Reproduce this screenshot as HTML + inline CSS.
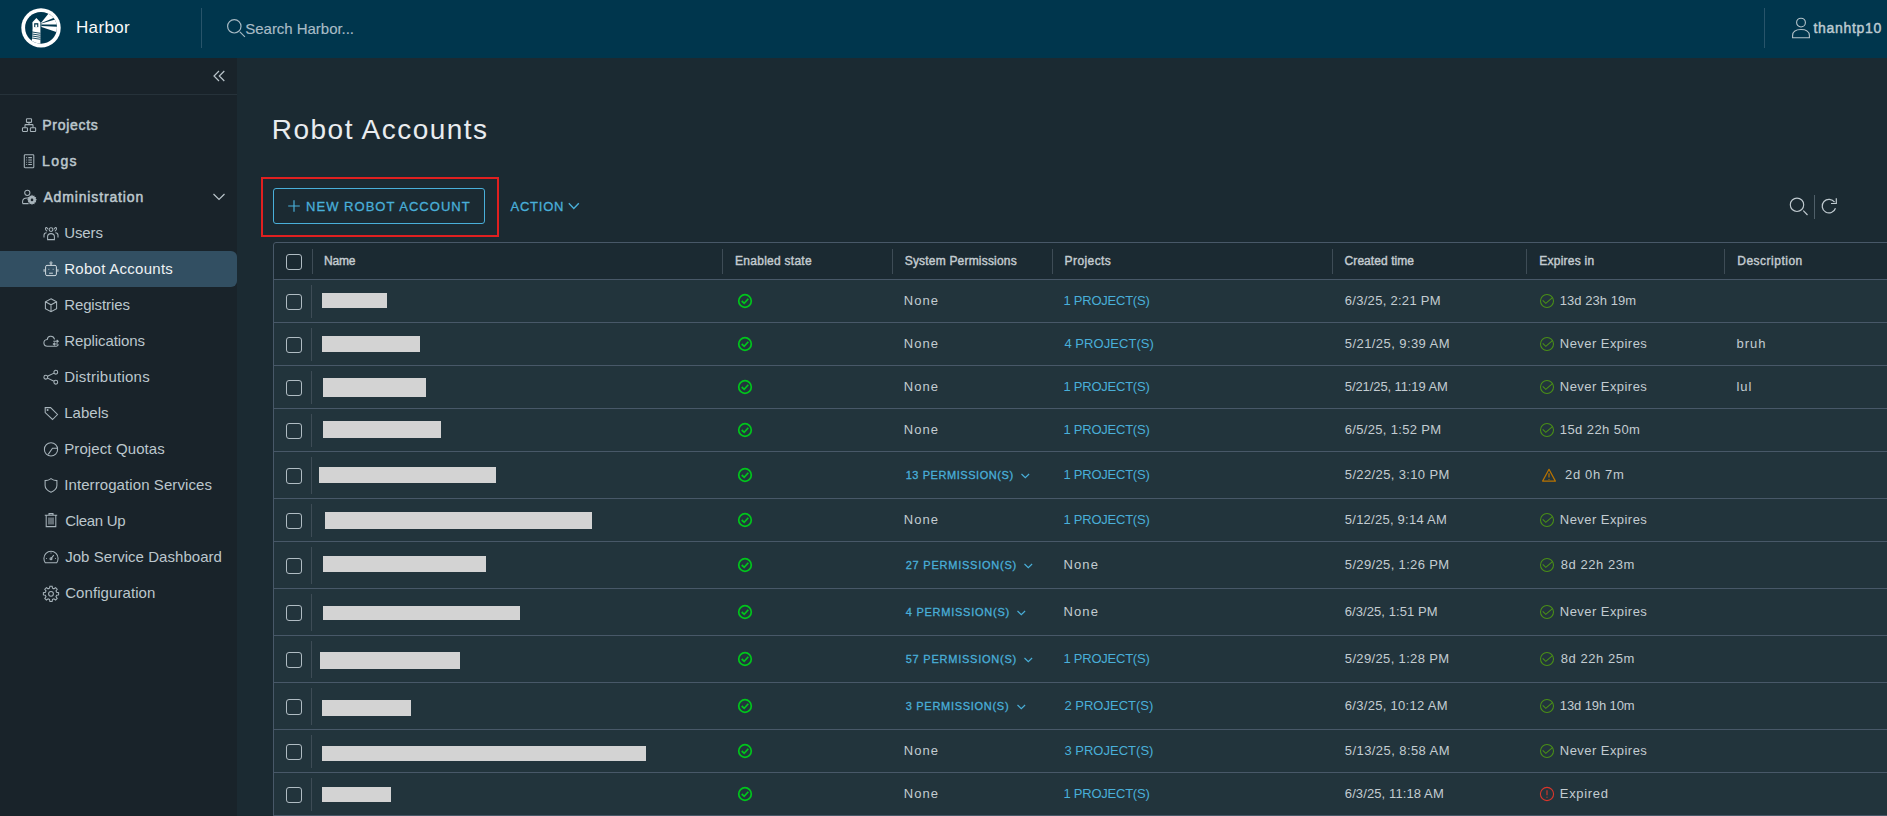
<!DOCTYPE html>
<html><head><meta charset="utf-8">
<style>
*{box-sizing:border-box;margin:0;padding:0}
html,body{width:1887px;height:816px;overflow:hidden;background:#1b2a32;font-family:"Liberation Sans",sans-serif;position:relative}
.a{position:absolute}
.t{position:absolute;white-space:nowrap;line-height:1}
svg{position:absolute;overflow:visible}
</style></head><body>
<div class="a" style="left:0px;top:0px;width:1887px;height:58px;background:#00364d;"></div>
<svg style="left:20px;top:7px" width="42" height="42" viewBox="0 0 42 42">
<defs><clipPath id="ic"><circle cx="21" cy="20.85" r="15.9"/></clipPath></defs>
<circle cx="21" cy="20.85" r="19.7" fill="#fff"/>
<circle cx="21" cy="20.85" r="15.9" fill="#00364d"/>
<g clip-path="url(#ic)">
<polygon fill="#fff" points="21.3,15.4 31,3.6 42,3.6 42,27 21.5,20.1"/>
<polygon fill="#00364d" points="21.4,16.0 41,7.9 41,10.9 21.4,16.5"/>
<polygon fill="#00364d" points="21.4,17.6 41,17.35 41,20.0 21.4,18.9"/>
<polygon fill="#fff" points="12.4,15.3 16.4,11 20.4,15.3 20.4,42 10.5,42 11.8,34.5 12.6,21"/>
</g>
<rect x="14.2" y="16.2" width="4.1" height="3.9" fill="#00364d"/>
<rect x="15.3" y="17.5" width="1.9" height="2.6" fill="#fff"/>
<g stroke="#00364d" stroke-width="0.9">
<line x1="11.5" y1="24.9" x2="20.4" y2="26.3"/>
<line x1="11.5" y1="26.9" x2="20.4" y2="28.3"/>
<line x1="11.5" y1="28.9" x2="20.4" y2="30.3"/>
<line x1="11.5" y1="30.9" x2="20.4" y2="32.3"/>
</g>
</svg>
<div class="t" style="left:75.90px;top:19px;font-size:17px;color:#fafafa;letter-spacing:0.380px">Harbor</div>
<div class="a" style="left:201px;top:8px;width:1px;height:40px;background:#28546a;"></div>
<svg style="left:226px;top:18px" width="20" height="20" viewBox="0 0 20 20"><g fill="none" stroke="#a7bac4" stroke-width="1.2"><circle cx="8.3" cy="8.3" r="6.7"/><line x1="13.9" y1="13.9" x2="18.9" y2="18.9"/></g></svg>
<div class="t" style="left:245.30px;top:21px;font-size:15px;color:#a9bcc6;letter-spacing:-0.033px;-webkit-text-stroke:0.15px #a9bcc6">Search Harbor...</div>
<div class="a" style="left:1764px;top:8px;width:1px;height:40px;background:#28546a;"></div>
<svg style="left:1791px;top:17px" width="21" height="22" viewBox="0 0 21 22"><g fill="none" stroke="#b4c3ca" stroke-width="1.1"><circle cx="10" cy="5.6" r="4.4"/><path d="M1.6,20.7 V18.6 C1.6,14.2 5.4,12.5 10,12.5 C14.6,12.5 18.4,14.2 18.4,18.6 V20.7 Z"/></g></svg>
<div class="t" style="left:1813.50px;top:21px;font-size:14px;color:#bccad1;letter-spacing:0.675px;-webkit-text-stroke:0.45px #bccad1">thanhtp10</div>
<div class="a" style="left:0px;top:58px;width:237px;height:758px;background:#19232a;"></div>
<div class="a" style="left:0px;top:94px;width:237px;height:1px;background:#26323a;"></div>
<svg style="left:212px;top:69px" width="14" height="14" viewBox="0 0 14 14"><g fill="none" stroke="#b9c4ca" stroke-width="1.2"><polyline points="7,2 2,7 7,12"/><polyline points="12.3,2 7.3,7 12.3,12"/></g></svg>
<div class="a" style="left:0px;top:251px;width:237px;height:36px;background:#324f62;border-radius:0 6px 6px 0"></div>
<svg style="left:21px;top:117px" width="16" height="16" viewBox="0 0 16 16"><g fill="none" stroke="#a8b4bb" stroke-width="1.05"><rect x="5.45" y="1.65" width="5.1" height="3.7" rx="0.7"/><rect x="1.45" y="10.75" width="5" height="3.7" rx="0.7"/><rect x="9.35" y="10.75" width="5.3" height="3.7" rx="0.7"/><path d="M8,5.35 V7.6 M4,10.75 V8.2 Q4,7.6 4.6,7.6 H11.4 Q12,7.6 12,8.2 V10.75"/></g></svg>
<div class="t" style="left:42.30px;top:118px;font-size:14px;color:#bcc7cd;letter-spacing:0.700px;-webkit-text-stroke:0.5px #bcc7cd">Projects</div>
<svg style="left:22px;top:153px" width="16" height="16" viewBox="0 0 16 16"><g fill="none" stroke="#a8b4bb" stroke-width="1.05"><rect x="2.3" y="1.7" width="9.5" height="13" rx="0.8"/><path d="M4.3,4.6 h0.8 M6.3,4.6 h3.6 M4.3,6.9 h0.8 M6.3,6.9 h3.6 M4.3,9.2 h0.8 M6.3,9.2 h3.6 M4.3,11.5 h0.8 M6.3,11.5 h3.6"/></g></svg>
<div class="t" style="left:42.10px;top:154px;font-size:14px;color:#bcc7cd;letter-spacing:1.367px;-webkit-text-stroke:0.5px #bcc7cd">Logs</div>
<svg style="left:21px;top:189px" width="16" height="16" viewBox="0 0 16 16"><g fill="none" stroke="#a8b4bb" stroke-width="1.05"><circle cx="6.3" cy="3.8" r="2.6"/><path d="M1.6,14.6 V12.6 Q1.6,9 6.3,9 Q7.5,9 8.3,9.3 M1.6,14.6 H7.6"/></g></svg>
<svg style="left:27.1px;top:194.4px" width="10" height="10" viewBox="0 0 10 10"><g fill="#a8b4bb"><path d="M5,0.6 l0.9,1.3 1.5,-0.5 0.2,1.6 1.6,0.3 -0.5,1.5 1.2,1 -1.2,1 0.5,1.5 -1.6,0.3 -0.2,1.6 -1.5,-0.5 -0.9,1.3 -0.9,-1.3 -1.5,0.5 -0.2,-1.6 -1.6,-0.3 0.5,-1.5 -1.2,-1 1.2,-1 -0.5,-1.5 1.6,-0.3 0.2,-1.6 1.5,0.5 Z"/></g><circle cx="5" cy="5.9" r="1.3" fill="#19232a"/></svg>
<div class="t" style="left:43.40px;top:190px;font-size:14px;color:#bcc7cd;letter-spacing:0.854px;-webkit-text-stroke:0.5px #bcc7cd">Administration</div>
<svg style="left:212px;top:192px" width="14" height="10" viewBox="0 0 14 10"><polyline points="1.5,2 7,7.5 12.5,2" fill="none" stroke="#b9c4ca" stroke-width="1.2"/></svg>
<svg style="left:43px;top:225px" width="16" height="16" viewBox="0 0 16 16"><g fill="none" stroke="#a8b4bb" stroke-width="1.05"><circle cx="8" cy="4.6" r="1.9"/><path d="M4.6,14.6 V11.8 Q4.6,8.6 8,8.6 Q11.4,8.6 11.4,11.8 V14.6 Z"/><path d="M5,4.2 Q3.3,1.3 2.5,3.2 Q2.2,5.4 4.2,6.2 M1,12.6 V10.3 Q1,7.8 3.6,7.8"/><path d="M11,4.2 Q12.7,1.3 13.5,3.2 Q13.8,5.4 11.8,6.2 M15,12.6 V10.3 Q15,7.8 12.4,7.8"/></g></svg>
<div class="t" style="left:64.20px;top:225px;font-size:15px;color:#bcc7cd;letter-spacing:-0.100px">Users</div>
<div class="t" style="left:64.20px;top:261px;font-size:15px;color:#eef2f4;letter-spacing:0.277px">Robot Accounts</div>
<div class="t" style="left:64.20px;top:297px;font-size:15px;color:#bcc7cd;letter-spacing:-0.111px">Registries</div>
<div class="t" style="left:64.20px;top:333px;font-size:15px;color:#bcc7cd;letter-spacing:-0.073px">Replications</div>
<div class="t" style="left:64.20px;top:369px;font-size:15px;color:#bcc7cd;letter-spacing:0.250px">Distributions</div>
<div class="t" style="left:64.20px;top:405px;font-size:15px;color:#bcc7cd;letter-spacing:0.020px">Labels</div>
<div class="t" style="left:64.20px;top:441px;font-size:15px;color:#bcc7cd;letter-spacing:0.108px">Project Quotas</div>
<div class="t" style="left:64.20px;top:477px;font-size:15px;color:#bcc7cd;letter-spacing:0.090px">Interrogation Services</div>
<div class="t" style="left:65.20px;top:513px;font-size:15px;color:#bcc7cd;letter-spacing:-0.300px">Clean Up</div>
<div class="t" style="left:65.20px;top:549px;font-size:15px;color:#bcc7cd;letter-spacing:0.040px">Job Service Dashboard</div>
<div class="t" style="left:65.20px;top:585px;font-size:15px;color:#bcc7cd;letter-spacing:0.075px">Configuration</div>
<svg style="left:43px;top:261px" width="16" height="16" viewBox="0 0 16 16"><g fill="none" stroke="#d2dbe0" stroke-width="1"><rect x="2.6" y="4.4" width="10.8" height="10.2" rx="1.4"/><circle cx="8" cy="1.9" r="1.05" stroke-width="0.9"/><path d="M8,3 V4.4 M1.1,8.2 V10.8 M14.9,8.2 V10.8 M6.1,12.2 H9.9"/><path d="M5.6,8.3 h0.6 M9.8,8.3 h0.6" stroke-width="1.2"/></g></svg>
<svg style="left:43px;top:297px" width="16" height="16" viewBox="0 0 16 16"><g fill="none" stroke="#a8b4bb" stroke-width="1.05"><path d="M8,1.8 L13.6,4.8 V11.6 L8,14.6 L2.4,11.6 V4.8 Z M2.4,4.8 L8,7.8 L13.6,4.8 M8,7.8 V14.6"/></g></svg>
<svg style="left:42px;top:332px" width="18" height="18" viewBox="0 0 18 18"><g fill="none" stroke="#a8b4bb" stroke-width="1.05"><path d="M12.6,7.3 Q11.6,4 8.4,4.3 Q5.6,4.6 5.2,7.6 Q1.8,7.9 1.9,11.1 Q2.2,14.2 5.4,14.2 H14.4 Q16,14 16.4,12.4"/><path d="M11.3,9.3 H16.2 M14.7,7.9 L16.3,9.3 L14.7,10.7 M16,12 H11.3 M12.9,10.6 L11.3,12 L12.9,13.4"/></g></svg>
<svg style="left:43px;top:369px" width="16" height="16" viewBox="0 0 16 16"><g fill="none" stroke="#a8b4bb" stroke-width="1.05"><circle cx="2.8" cy="8.2" r="1.9"/><circle cx="12.8" cy="3.2" r="1.9"/><circle cx="12.8" cy="13.2" r="1.9"/><path d="M4.5,7.3 L11,4.1 M4.5,9.1 L11,12.3"/></g></svg>
<svg style="left:43px;top:405px" width="16" height="16" viewBox="0 0 16 16"><g fill="none" stroke="#a8b4bb" stroke-width="1.05"><path d="M2.2,2.6 H7.6 L14.5,9.5 L9.5,14.5 L2.2,7.6 Z"/><circle cx="4.6" cy="5" r="0.5" fill="{ICON}"/></g></svg>
<svg style="left:43px;top:441px" width="16" height="16" viewBox="0 0 16 16"><g fill="none" stroke="#a8b4bb" stroke-width="1.05"><circle cx="8" cy="8.4" r="6.6"/><path d="M14,7.2 H9.5 L5.2,13.4"/></g></svg>
<svg style="left:43px;top:477px" width="16" height="16" viewBox="0 0 16 16"><g fill="none" stroke="#a8b4bb" stroke-width="1.05"><path d="M8,1.6 Q10.5,3.6 13.9,3.6 V8.6 Q13.9,12.9 8,15.2 Q2.1,12.9 2.1,8.6 V3.6 Q5.5,3.6 8,1.6 Z"/></g></svg>
<svg style="left:43px;top:512px" width="16" height="16" viewBox="0 0 16 16"><g fill="none" stroke="#a8b4bb" stroke-width="1.05"><path d="M1.8,3.3 H14.2 M6,3.3 V1.6 H10 V3.3 M3.2,3.3 V14.6 H12.8 V3.3 M6,5.6 V12.4 M8,5.6 V12.4 M10,5.6 V12.4"/></g></svg>
<svg style="left:43px;top:548px" width="16" height="16" viewBox="0 0 16 16"><g fill="none" stroke="#a8b4bb" stroke-width="1.05"><path d="M2.4,14.8 Q0.9,12.9 0.9,10.3 A7.1,7.1 0 0 1 15.1,10.3 Q15.1,12.9 13.6,14.8 Z"/><path d="M8,10.6 L10.8,7.2 M3,10.4 H3.8 M12.2,10.4 H13 M8,4.6 V5.4"/><circle cx="8" cy="10.8" r="1" fill="{ICON}"/></g></svg>
<svg style="left:43px;top:585px" width="17" height="17" viewBox="0 0 17 17"><g fill="none" stroke="#a8b4bb" stroke-width="1.05"><path d="M6.9,1.2 H9.1 L9.5,3.2 L10.9,3.8 L12.6,2.6 L14.2,4.2 L13,5.9 L13.6,7.3 L15.6,7.7 V9.9 L13.6,10.3 L13,11.7 L14.2,13.4 L12.6,15 L10.9,13.8 L9.5,14.4 L9.1,16.4 H6.9 L6.5,14.4 L5.1,13.8 L3.4,15 L1.8,13.4 L3,11.7 L2.4,10.3 L0.4,9.9 V7.7 L2.4,7.3 L3,5.9 L1.8,4.2 L3.4,2.6 L5.1,3.8 L6.5,3.2 Z"/><circle cx="8" cy="8.8" r="2.4"/></g></svg>
<div class="t" style="left:271.80px;top:116px;font-size:28px;color:#e9ecef;letter-spacing:1.477px">Robot Accounts</div>
<div class="a" style="left:261px;top:177px;width:238px;height:60px;background:transparent;border:2px solid #e02020"></div>
<div class="a" style="left:273px;top:188px;width:212px;height:36px;background:transparent;border:1px solid #49afd9;border-radius:3px"></div>
<svg style="left:287px;top:199px" width="14" height="14" viewBox="0 0 14 14"><path d="M7,1.2 V12.8 M1.2,7 H12.8" stroke="#49afd9" stroke-width="1.2" fill="none"/></svg>
<div class="t" style="left:306.00px;top:200px;font-size:13px;color:#49afd9;letter-spacing:1.037px;-webkit-text-stroke:0.3px #49afd9">NEW ROBOT ACCOUNT</div>
<div class="t" style="left:510.50px;top:200px;font-size:13px;color:#49afd9;letter-spacing:0.780px;-webkit-text-stroke:0.3px #49afd9">ACTION</div>
<svg style="left:567px;top:201px" width="14" height="11" viewBox="0 0 14 11"><polyline points="1.8,2.3 6.8,7.6 11.8,2.3" fill="none" stroke="#49afd9" stroke-width="1.4"/></svg>
<svg style="left:1788px;top:196px" width="22" height="22" viewBox="0 0 22 22"><g fill="none" stroke="#c0cad0" stroke-width="1.15"><circle cx="9" cy="8.75" r="6.7"/><line x1="15.3" y1="14.6" x2="19.5" y2="19"/></g></svg>
<div class="a" style="left:1814px;top:195px;width:1px;height:24px;background:#4f5f69;"></div>
<svg style="left:1820px;top:196px" width="20" height="20" viewBox="0 0 20 20"><g fill="none" stroke="#c0cad0" stroke-width="1.2"><path d="M14.57,6.2 A6.8,6.8 0 1 0 15.47,12.2"/><polyline points="11,7.5 16.3,7.5 16.3,2.3"/></g></svg>
<div class="a" style="left:273px;top:242px;width:1618px;height:600px;background:#1b2a32;border:1px solid #485868;border-radius:3px"></div>
<div class="a" style="left:274px;top:279px;width:1614px;height:1px;background:#485868;"></div>
<div class="a" style="left:312px;top:249px;width:1px;height:25px;background:#3e4c56;"></div>
<div class="a" style="left:722px;top:249px;width:1px;height:25px;background:#3e4c56;"></div>
<div class="a" style="left:892px;top:249px;width:1px;height:25px;background:#3e4c56;"></div>
<div class="a" style="left:1052px;top:249px;width:1px;height:25px;background:#3e4c56;"></div>
<div class="a" style="left:1332px;top:249px;width:1px;height:25px;background:#3e4c56;"></div>
<div class="a" style="left:1526px;top:249px;width:1px;height:25px;background:#3e4c56;"></div>
<div class="a" style="left:1724px;top:249px;width:1px;height:25px;background:#3e4c56;"></div>
<div class="t" style="left:323.90px;top:255px;font-size:12px;color:#c4ccd1;letter-spacing:-0.167px;-webkit-text-stroke:0.4px #c4ccd1">Name</div>
<div class="t" style="left:735.10px;top:255px;font-size:12px;color:#c4ccd1;letter-spacing:0.258px;-webkit-text-stroke:0.4px #c4ccd1">Enabled state</div>
<div class="t" style="left:904.70px;top:255px;font-size:12px;color:#c4ccd1;letter-spacing:0.194px;-webkit-text-stroke:0.4px #c4ccd1">System Permissions</div>
<div class="t" style="left:1064.60px;top:255px;font-size:12px;color:#c4ccd1;letter-spacing:0.414px;-webkit-text-stroke:0.4px #c4ccd1">Projects</div>
<div class="t" style="left:1344.60px;top:255px;font-size:12px;color:#c4ccd1;letter-spacing:0.064px;-webkit-text-stroke:0.4px #c4ccd1">Created time</div>
<div class="t" style="left:1539.30px;top:255px;font-size:12px;color:#c4ccd1;letter-spacing:0.233px;-webkit-text-stroke:0.4px #c4ccd1">Expires in</div>
<div class="t" style="left:1737.30px;top:255px;font-size:12px;color:#c4ccd1;letter-spacing:0.490px;-webkit-text-stroke:0.4px #c4ccd1">Description</div>
<div class="a" style="left:286px;top:254px;width:16px;height:16px;background:transparent;border:1.3px solid #b0bcc3;border-radius:3px"></div>
<div class="a" style="left:274px;top:280px;width:1614px;height:42px;background:#22343c;"></div>
<div class="a" style="left:274px;top:322px;width:1614px;height:1px;background:#485868;"></div>
<div class="a" style="left:286px;top:294px;width:16px;height:16px;background:transparent;border:1.3px solid #b0bcc3;border-radius:3px"></div>
<div class="a" style="left:311px;top:285px;width:1px;height:33px;background:#3e4c56;"></div>
<div class="a" style="left:322px;top:293px;width:65px;height:15px;background:#d3d3d3;"></div>
<svg style="left:737px;top:293px" width="16" height="16" viewBox="0 0 16 16"><g fill="none" stroke="#00c51c" stroke-width="1.7"><circle cx="8" cy="8" r="6.3"/><polyline points="4.7,8 7.2,10.3 11.3,5.8"/></g></svg>
<div class="t" style="left:903.70px;top:294px;font-size:13px;color:#c3ccd1;letter-spacing:1.067px">None</div>
<div class="t" style="left:1063.40px;top:294px;font-size:13px;color:#49afd9;letter-spacing:-0.227px">1 PROJECT(S)</div>
<div class="t" style="left:1344.80px;top:294px;font-size:13px;color:#c3ccd1;letter-spacing:0.286px">6/3/25, 2:21 PM</div>
<svg style="left:1539px;top:293px" width="16" height="16" viewBox="0 0 16 16"><g fill="none" stroke="#4a8f17" stroke-width="1.05"><circle cx="8" cy="8" r="6.5"/><polyline points="3.7,7.3 6.8,10.4 13.4,4.7"/></g></svg>
<div class="t" style="left:1559.80px;top:294px;font-size:13px;color:#c3ccd1;letter-spacing:0.040px">13d 23h 19m</div>
<div class="a" style="left:274px;top:323px;width:1614px;height:42px;background:#22343c;"></div>
<div class="a" style="left:274px;top:365px;width:1614px;height:1px;background:#485868;"></div>
<div class="a" style="left:286px;top:337px;width:16px;height:16px;background:transparent;border:1.3px solid #b0bcc3;border-radius:3px"></div>
<div class="a" style="left:311px;top:328px;width:1px;height:33px;background:#3e4c56;"></div>
<div class="a" style="left:322px;top:336px;width:98px;height:16px;background:#d3d3d3;"></div>
<svg style="left:737px;top:336px" width="16" height="16" viewBox="0 0 16 16"><g fill="none" stroke="#00c51c" stroke-width="1.7"><circle cx="8" cy="8" r="6.3"/><polyline points="4.7,8 7.2,10.3 11.3,5.8"/></g></svg>
<div class="t" style="left:903.70px;top:337px;font-size:13px;color:#c3ccd1;letter-spacing:1.067px">None</div>
<div class="t" style="left:1064.40px;top:337px;font-size:13px;color:#49afd9;letter-spacing:0.064px">4 PROJECT(S)</div>
<div class="t" style="left:1344.80px;top:337px;font-size:13px;color:#c3ccd1;letter-spacing:0.427px">5/21/25, 9:39 AM</div>
<svg style="left:1539px;top:336px" width="16" height="16" viewBox="0 0 16 16"><g fill="none" stroke="#4a8f17" stroke-width="1.05"><circle cx="8" cy="8" r="6.5"/><polyline points="3.7,7.3 6.8,10.4 13.4,4.7"/></g></svg>
<div class="t" style="left:1559.80px;top:337px;font-size:13px;color:#c3ccd1;letter-spacing:0.450px">Never Expires</div>
<div class="t" style="left:1736.40px;top:337px;font-size:13px;color:#c3ccd1;letter-spacing:1.033px">bruh</div>
<div class="a" style="left:274px;top:366px;width:1614px;height:42px;background:#22343c;"></div>
<div class="a" style="left:274px;top:408px;width:1614px;height:1px;background:#485868;"></div>
<div class="a" style="left:286px;top:380px;width:16px;height:16px;background:transparent;border:1.3px solid #b0bcc3;border-radius:3px"></div>
<div class="a" style="left:311px;top:371px;width:1px;height:33px;background:#3e4c56;"></div>
<div class="a" style="left:322.5px;top:378px;width:103.5px;height:19px;background:#d3d3d3;"></div>
<svg style="left:737px;top:379px" width="16" height="16" viewBox="0 0 16 16"><g fill="none" stroke="#00c51c" stroke-width="1.7"><circle cx="8" cy="8" r="6.3"/><polyline points="4.7,8 7.2,10.3 11.3,5.8"/></g></svg>
<div class="t" style="left:903.70px;top:380px;font-size:13px;color:#c3ccd1;letter-spacing:1.067px">None</div>
<div class="t" style="left:1063.40px;top:380px;font-size:13px;color:#49afd9;letter-spacing:-0.227px">1 PROJECT(S)</div>
<div class="t" style="left:1344.80px;top:380px;font-size:13px;color:#c3ccd1;letter-spacing:-0.094px">5/21/25, 11:19 AM</div>
<svg style="left:1539px;top:379px" width="16" height="16" viewBox="0 0 16 16"><g fill="none" stroke="#4a8f17" stroke-width="1.05"><circle cx="8" cy="8" r="6.5"/><polyline points="3.7,7.3 6.8,10.4 13.4,4.7"/></g></svg>
<div class="t" style="left:1559.80px;top:380px;font-size:13px;color:#c3ccd1;letter-spacing:0.450px">Never Expires</div>
<div class="t" style="left:1736.40px;top:380px;font-size:13px;color:#c3ccd1;letter-spacing:1.050px">lul</div>
<div class="a" style="left:274px;top:409px;width:1614px;height:42px;background:#22343c;"></div>
<div class="a" style="left:274px;top:451px;width:1614px;height:1px;background:#485868;"></div>
<div class="a" style="left:286px;top:423px;width:16px;height:16px;background:transparent;border:1.3px solid #b0bcc3;border-radius:3px"></div>
<div class="a" style="left:311px;top:414px;width:1px;height:33px;background:#3e4c56;"></div>
<div class="a" style="left:322.5px;top:421px;width:118.5px;height:16.5px;background:#d3d3d3;"></div>
<svg style="left:737px;top:422px" width="16" height="16" viewBox="0 0 16 16"><g fill="none" stroke="#00c51c" stroke-width="1.7"><circle cx="8" cy="8" r="6.3"/><polyline points="4.7,8 7.2,10.3 11.3,5.8"/></g></svg>
<div class="t" style="left:903.70px;top:423px;font-size:13px;color:#c3ccd1;letter-spacing:1.067px">None</div>
<div class="t" style="left:1063.40px;top:423px;font-size:13px;color:#49afd9;letter-spacing:-0.227px">1 PROJECT(S)</div>
<div class="t" style="left:1344.80px;top:423px;font-size:13px;color:#c3ccd1;letter-spacing:0.314px">6/5/25, 1:52 PM</div>
<svg style="left:1539px;top:422px" width="16" height="16" viewBox="0 0 16 16"><g fill="none" stroke="#4a8f17" stroke-width="1.05"><circle cx="8" cy="8" r="6.5"/><polyline points="3.7,7.3 6.8,10.4 13.4,4.7"/></g></svg>
<div class="t" style="left:1559.80px;top:423px;font-size:13px;color:#c3ccd1;letter-spacing:0.420px">15d 22h 50m</div>
<div class="a" style="left:274px;top:452px;width:1614px;height:46px;background:#22343c;"></div>
<div class="a" style="left:274px;top:498px;width:1614px;height:1px;background:#485868;"></div>
<div class="a" style="left:286px;top:468px;width:16px;height:16px;background:transparent;border:1.3px solid #b0bcc3;border-radius:3px"></div>
<div class="a" style="left:311px;top:457px;width:1px;height:37px;background:#3e4c56;"></div>
<div class="a" style="left:319px;top:467px;width:177px;height:16px;background:#d3d3d3;"></div>
<svg style="left:737px;top:467px" width="16" height="16" viewBox="0 0 16 16"><g fill="none" stroke="#00c51c" stroke-width="1.7"><circle cx="8" cy="8" r="6.3"/><polyline points="4.7,8 7.2,10.3 11.3,5.8"/></g></svg>
<div class="t" style="left:905.70px;top:470px;font-size:11px;color:#49afd9;letter-spacing:0.560px;-webkit-text-stroke:0.3px #49afd9">13 PERMISSION(S)</div>
<svg style="left:1019.7px;top:473px" width="10" height="8" viewBox="0 0 10 8"><polyline points="1.5,1 5.3,4.6 9.1,1" fill="none" stroke="#49afd9" stroke-width="1.2"/></svg>
<div class="t" style="left:1063.40px;top:468px;font-size:13px;color:#49afd9;letter-spacing:-0.227px">1 PROJECT(S)</div>
<div class="t" style="left:1344.80px;top:468px;font-size:13px;color:#c3ccd1;letter-spacing:0.367px">5/22/25, 3:10 PM</div>
<svg style="left:1540px;top:467px" width="18" height="16" viewBox="0 0 18 16"><g fill="none" stroke="#b87300" stroke-width="1.2" stroke-linejoin="round"><path d="M9,2.3 L15.4,14.1 H2.6 Z"/><path d="M9,6.2 V10.6 M9,11.9 V12.7"/></g></svg>
<div class="t" style="left:1565.10px;top:468px;font-size:13px;color:#c3ccd1;letter-spacing:0.643px">2d 0h 7m</div>
<div class="a" style="left:274px;top:499px;width:1614px;height:42px;background:#22343c;"></div>
<div class="a" style="left:274px;top:541px;width:1614px;height:1px;background:#485868;"></div>
<div class="a" style="left:286px;top:513px;width:16px;height:16px;background:transparent;border:1.3px solid #b0bcc3;border-radius:3px"></div>
<div class="a" style="left:311px;top:504px;width:1px;height:33px;background:#3e4c56;"></div>
<div class="a" style="left:324.5px;top:512px;width:267.20000000000005px;height:17px;background:#d3d3d3;"></div>
<svg style="left:737px;top:512px" width="16" height="16" viewBox="0 0 16 16"><g fill="none" stroke="#00c51c" stroke-width="1.7"><circle cx="8" cy="8" r="6.3"/><polyline points="4.7,8 7.2,10.3 11.3,5.8"/></g></svg>
<div class="t" style="left:903.70px;top:513px;font-size:13px;color:#c3ccd1;letter-spacing:1.067px">None</div>
<div class="t" style="left:1063.40px;top:513px;font-size:13px;color:#49afd9;letter-spacing:-0.227px">1 PROJECT(S)</div>
<div class="t" style="left:1344.80px;top:513px;font-size:13px;color:#c3ccd1;letter-spacing:0.247px">5/12/25, 9:14 AM</div>
<svg style="left:1539px;top:512px" width="16" height="16" viewBox="0 0 16 16"><g fill="none" stroke="#4a8f17" stroke-width="1.05"><circle cx="8" cy="8" r="6.5"/><polyline points="3.7,7.3 6.8,10.4 13.4,4.7"/></g></svg>
<div class="t" style="left:1559.80px;top:513px;font-size:13px;color:#c3ccd1;letter-spacing:0.450px">Never Expires</div>
<div class="a" style="left:274px;top:542px;width:1614px;height:46px;background:#22343c;"></div>
<div class="a" style="left:274px;top:588px;width:1614px;height:1px;background:#485868;"></div>
<div class="a" style="left:286px;top:558px;width:16px;height:16px;background:transparent;border:1.3px solid #b0bcc3;border-radius:3px"></div>
<div class="a" style="left:311px;top:547px;width:1px;height:37px;background:#3e4c56;"></div>
<div class="a" style="left:322.7px;top:556px;width:163.10000000000002px;height:16px;background:#d3d3d3;"></div>
<svg style="left:737px;top:557px" width="16" height="16" viewBox="0 0 16 16"><g fill="none" stroke="#00c51c" stroke-width="1.7"><circle cx="8" cy="8" r="6.3"/><polyline points="4.7,8 7.2,10.3 11.3,5.8"/></g></svg>
<div class="t" style="left:905.70px;top:560px;font-size:11px;color:#49afd9;letter-spacing:0.767px;-webkit-text-stroke:0.3px #49afd9">27 PERMISSION(S)</div>
<svg style="left:1022.5px;top:563px" width="10" height="8" viewBox="0 0 10 8"><polyline points="1.5,1 5.3,4.6 9.1,1" fill="none" stroke="#49afd9" stroke-width="1.2"/></svg>
<div class="t" style="left:1063.60px;top:558px;font-size:13px;color:#c3ccd1;letter-spacing:1.067px">None</div>
<div class="t" style="left:1344.80px;top:558px;font-size:13px;color:#c3ccd1;letter-spacing:0.353px">5/29/25, 1:26 PM</div>
<svg style="left:1539px;top:557px" width="16" height="16" viewBox="0 0 16 16"><g fill="none" stroke="#4a8f17" stroke-width="1.05"><circle cx="8" cy="8" r="6.5"/><polyline points="3.7,7.3 6.8,10.4 13.4,4.7"/></g></svg>
<div class="t" style="left:1560.80px;top:558px;font-size:13px;color:#c3ccd1;letter-spacing:0.544px">8d 22h 23m</div>
<div class="a" style="left:274px;top:589px;width:1614px;height:46px;background:#22343c;"></div>
<div class="a" style="left:274px;top:635px;width:1614px;height:1px;background:#485868;"></div>
<div class="a" style="left:286px;top:605px;width:16px;height:16px;background:transparent;border:1.3px solid #b0bcc3;border-radius:3px"></div>
<div class="a" style="left:311px;top:594px;width:1px;height:37px;background:#3e4c56;"></div>
<div class="a" style="left:322.7px;top:606px;width:197.09999999999997px;height:14px;background:#d3d3d3;"></div>
<svg style="left:737px;top:604px" width="16" height="16" viewBox="0 0 16 16"><g fill="none" stroke="#00c51c" stroke-width="1.7"><circle cx="8" cy="8" r="6.3"/><polyline points="4.7,8 7.2,10.3 11.3,5.8"/></g></svg>
<div class="t" style="left:905.70px;top:607px;font-size:11px;color:#49afd9;letter-spacing:0.757px;-webkit-text-stroke:0.3px #49afd9">4 PERMISSION(S)</div>
<svg style="left:1015.6px;top:610px" width="10" height="8" viewBox="0 0 10 8"><polyline points="1.5,1 5.3,4.6 9.1,1" fill="none" stroke="#49afd9" stroke-width="1.2"/></svg>
<div class="t" style="left:1063.60px;top:605px;font-size:13px;color:#c3ccd1;letter-spacing:1.067px">None</div>
<div class="t" style="left:1344.80px;top:605px;font-size:13px;color:#c3ccd1;letter-spacing:0.071px">6/3/25, 1:51 PM</div>
<svg style="left:1539px;top:604px" width="16" height="16" viewBox="0 0 16 16"><g fill="none" stroke="#4a8f17" stroke-width="1.05"><circle cx="8" cy="8" r="6.5"/><polyline points="3.7,7.3 6.8,10.4 13.4,4.7"/></g></svg>
<div class="t" style="left:1559.80px;top:605px;font-size:13px;color:#c3ccd1;letter-spacing:0.450px">Never Expires</div>
<div class="a" style="left:274px;top:636px;width:1614px;height:46px;background:#22343c;"></div>
<div class="a" style="left:274px;top:682px;width:1614px;height:1px;background:#485868;"></div>
<div class="a" style="left:286px;top:652px;width:16px;height:16px;background:transparent;border:1.3px solid #b0bcc3;border-radius:3px"></div>
<div class="a" style="left:311px;top:641px;width:1px;height:37px;background:#3e4c56;"></div>
<div class="a" style="left:320px;top:652px;width:140px;height:17px;background:#d3d3d3;"></div>
<svg style="left:737px;top:651px" width="16" height="16" viewBox="0 0 16 16"><g fill="none" stroke="#00c51c" stroke-width="1.7"><circle cx="8" cy="8" r="6.3"/><polyline points="4.7,8 7.2,10.3 11.3,5.8"/></g></svg>
<div class="t" style="left:905.70px;top:654px;font-size:11px;color:#49afd9;letter-spacing:0.767px;-webkit-text-stroke:0.3px #49afd9">57 PERMISSION(S)</div>
<svg style="left:1022.5px;top:657px" width="10" height="8" viewBox="0 0 10 8"><polyline points="1.5,1 5.3,4.6 9.1,1" fill="none" stroke="#49afd9" stroke-width="1.2"/></svg>
<div class="t" style="left:1063.40px;top:652px;font-size:13px;color:#49afd9;letter-spacing:-0.227px">1 PROJECT(S)</div>
<div class="t" style="left:1344.80px;top:652px;font-size:13px;color:#c3ccd1;letter-spacing:0.353px">5/29/25, 1:28 PM</div>
<svg style="left:1539px;top:651px" width="16" height="16" viewBox="0 0 16 16"><g fill="none" stroke="#4a8f17" stroke-width="1.05"><circle cx="8" cy="8" r="6.5"/><polyline points="3.7,7.3 6.8,10.4 13.4,4.7"/></g></svg>
<div class="t" style="left:1560.80px;top:652px;font-size:13px;color:#c3ccd1;letter-spacing:0.544px">8d 22h 25m</div>
<div class="a" style="left:274px;top:683px;width:1614px;height:46px;background:#22343c;"></div>
<div class="a" style="left:274px;top:729px;width:1614px;height:1px;background:#485868;"></div>
<div class="a" style="left:286px;top:699px;width:16px;height:16px;background:transparent;border:1.3px solid #b0bcc3;border-radius:3px"></div>
<div class="a" style="left:311px;top:688px;width:1px;height:37px;background:#3e4c56;"></div>
<div class="a" style="left:322px;top:700px;width:89px;height:16px;background:#d3d3d3;"></div>
<svg style="left:737px;top:698px" width="16" height="16" viewBox="0 0 16 16"><g fill="none" stroke="#00c51c" stroke-width="1.7"><circle cx="8" cy="8" r="6.3"/><polyline points="4.7,8 7.2,10.3 11.3,5.8"/></g></svg>
<div class="t" style="left:905.70px;top:701px;font-size:11px;color:#49afd9;letter-spacing:0.714px;-webkit-text-stroke:0.3px #49afd9">3 PERMISSION(S)</div>
<svg style="left:1015.6px;top:704px" width="10" height="8" viewBox="0 0 10 8"><polyline points="1.5,1 5.3,4.6 9.1,1" fill="none" stroke="#49afd9" stroke-width="1.2"/></svg>
<div class="t" style="left:1064.40px;top:699px;font-size:13px;color:#49afd9;letter-spacing:0.009px">2 PROJECT(S)</div>
<div class="t" style="left:1344.80px;top:699px;font-size:13px;color:#c3ccd1;letter-spacing:0.300px">6/3/25, 10:12 AM</div>
<svg style="left:1539px;top:698px" width="16" height="16" viewBox="0 0 16 16"><g fill="none" stroke="#4a8f17" stroke-width="1.05"><circle cx="8" cy="8" r="6.5"/><polyline points="3.7,7.3 6.8,10.4 13.4,4.7"/></g></svg>
<div class="t" style="left:1559.80px;top:699px;font-size:13px;color:#c3ccd1;letter-spacing:-0.110px">13d 19h 10m</div>
<div class="a" style="left:274px;top:730px;width:1614px;height:42px;background:#22343c;"></div>
<div class="a" style="left:274px;top:772px;width:1614px;height:1px;background:#485868;"></div>
<div class="a" style="left:286px;top:744px;width:16px;height:16px;background:transparent;border:1.3px solid #b0bcc3;border-radius:3px"></div>
<div class="a" style="left:311px;top:735px;width:1px;height:33px;background:#3e4c56;"></div>
<div class="a" style="left:322px;top:746px;width:324px;height:15px;background:#d3d3d3;"></div>
<svg style="left:737px;top:743px" width="16" height="16" viewBox="0 0 16 16"><g fill="none" stroke="#00c51c" stroke-width="1.7"><circle cx="8" cy="8" r="6.3"/><polyline points="4.7,8 7.2,10.3 11.3,5.8"/></g></svg>
<div class="t" style="left:903.70px;top:744px;font-size:13px;color:#c3ccd1;letter-spacing:1.067px">None</div>
<div class="t" style="left:1064.40px;top:744px;font-size:13px;color:#49afd9;letter-spacing:0.018px">3 PROJECT(S)</div>
<div class="t" style="left:1344.80px;top:744px;font-size:13px;color:#c3ccd1;letter-spacing:0.427px">5/13/25, 8:58 AM</div>
<svg style="left:1539px;top:743px" width="16" height="16" viewBox="0 0 16 16"><g fill="none" stroke="#4a8f17" stroke-width="1.05"><circle cx="8" cy="8" r="6.5"/><polyline points="3.7,7.3 6.8,10.4 13.4,4.7"/></g></svg>
<div class="t" style="left:1559.80px;top:744px;font-size:13px;color:#c3ccd1;letter-spacing:0.450px">Never Expires</div>
<div class="a" style="left:274px;top:773px;width:1614px;height:42px;background:#22343c;"></div>
<div class="a" style="left:274px;top:815px;width:1614px;height:1px;background:#485868;"></div>
<div class="a" style="left:286px;top:787px;width:16px;height:16px;background:transparent;border:1.3px solid #b0bcc3;border-radius:3px"></div>
<div class="a" style="left:311px;top:778px;width:1px;height:33px;background:#3e4c56;"></div>
<div class="a" style="left:322px;top:787px;width:69px;height:15px;background:#d3d3d3;"></div>
<svg style="left:737px;top:786px" width="16" height="16" viewBox="0 0 16 16"><g fill="none" stroke="#00c51c" stroke-width="1.7"><circle cx="8" cy="8" r="6.3"/><polyline points="4.7,8 7.2,10.3 11.3,5.8"/></g></svg>
<div class="t" style="left:903.70px;top:787px;font-size:13px;color:#c3ccd1;letter-spacing:1.067px">None</div>
<div class="t" style="left:1063.40px;top:787px;font-size:13px;color:#49afd9;letter-spacing:-0.227px">1 PROJECT(S)</div>
<div class="t" style="left:1344.80px;top:787px;font-size:13px;color:#c3ccd1;letter-spacing:0.107px">6/3/25, 11:18 AM</div>
<svg style="left:1539px;top:786px" width="16" height="16" viewBox="0 0 16 16"><g fill="none" stroke="#d9362b" stroke-width="1.1"><circle cx="8" cy="8" r="6.6"/><path d="M8,4.2 V9.2 M8,10.8 V11.8"/></g></svg>
<div class="t" style="left:1559.80px;top:787px;font-size:13px;color:#c3ccd1;letter-spacing:0.683px">Expired</div>
</body></html>
